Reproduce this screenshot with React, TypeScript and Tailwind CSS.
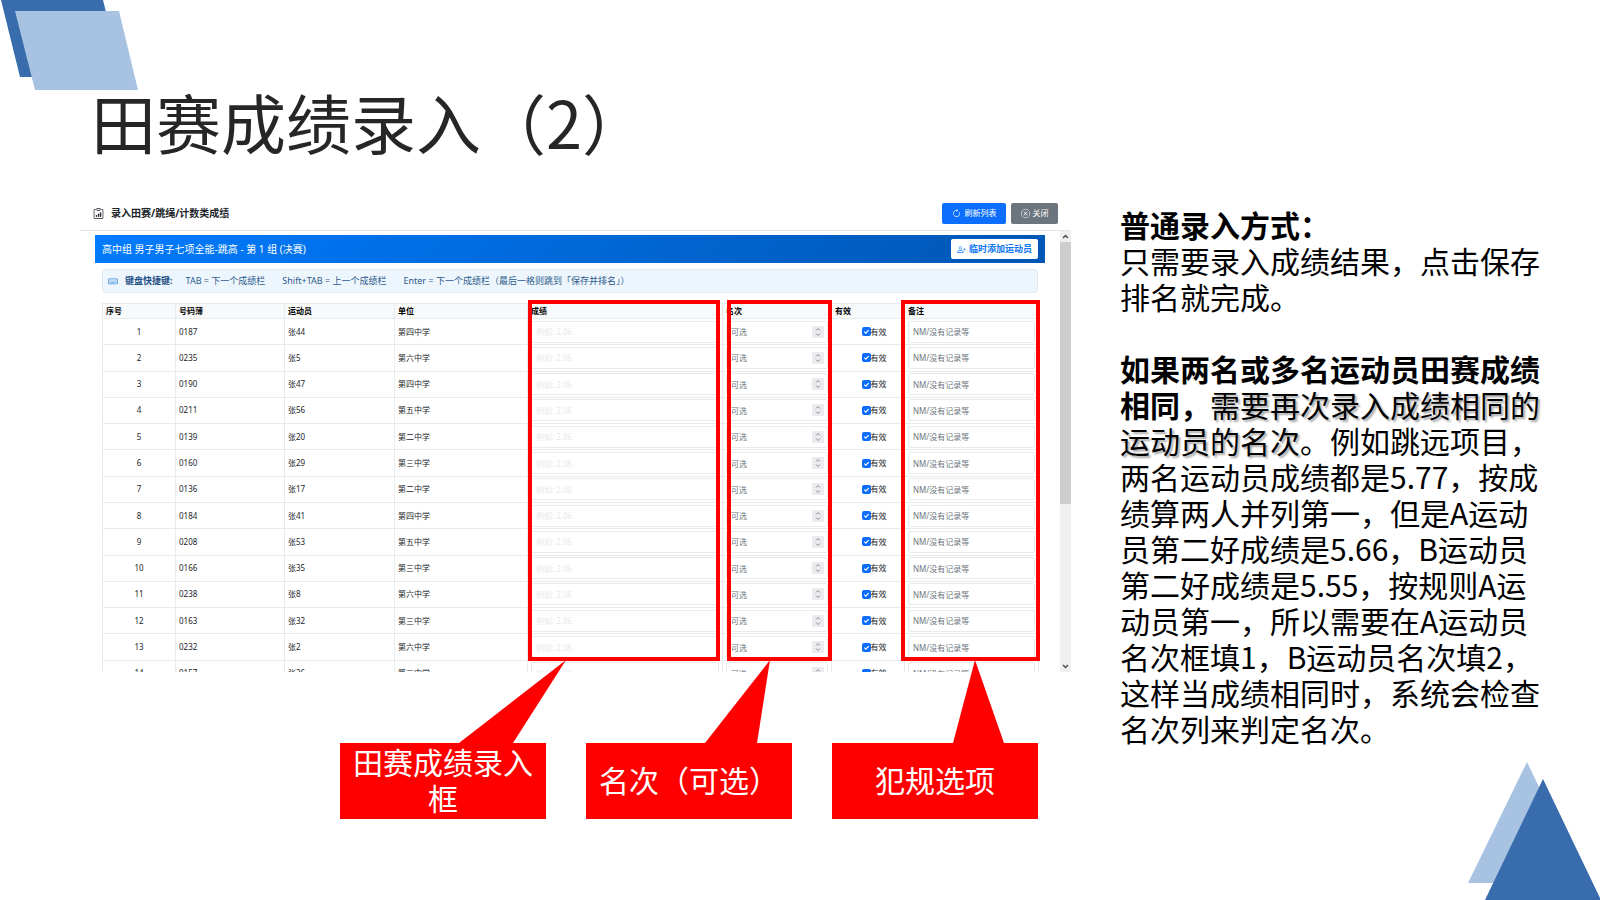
import React from 'react';
import {
  BsArrowClockwise,
  BsClipboardData,
  BsKeyboard,
  BsPersonPlus,
  BsXCircle,
} from 'react-icons/bs';

interface Athlete {
  bib: string;
  name: string;
  unit: string;
}

const athletes: Athlete[] = [
  { bib: '0187', name: '张44', unit: '第四中学' },
  { bib: '0235', name: '张5', unit: '第六中学' },
  { bib: '0190', name: '张47', unit: '第四中学' },
  { bib: '0211', name: '张56', unit: '第五中学' },
  { bib: '0139', name: '张20', unit: '第二中学' },
  { bib: '0160', name: '张29', unit: '第三中学' },
  { bib: '0136', name: '张17', unit: '第二中学' },
  { bib: '0184', name: '张41', unit: '第四中学' },
  { bib: '0208', name: '张53', unit: '第五中学' },
  { bib: '0166', name: '张35', unit: '第三中学' },
  { bib: '0238', name: '张8', unit: '第六中学' },
  { bib: '0163', name: '张32', unit: '第三中学' },
  { bib: '0232', name: '张2', unit: '第六中学' },
  { bib: '0157', name: '张26', unit: '第三中学' },
];

const cell = 'border border-[#e9ecef] px-[3px] py-0';
const field = 'h-[22px] w-full rounded-xs border border-[#e9ecef] bg-white px-1 text-[8px]';
const frame = 'pointer-events-none absolute -top-1 z-10 h-[361px] border-4 border-[#ff0000]';

function Decorations() {
  return (
    <>
      <svg className="absolute left-0 top-0" width="140" height="92" aria-hidden="true">
        <polygon points="1,0 103,0 122,77 20,77" fill="#386cad" />
        <polygon points="15,11 119,11 138,90 35,90" fill="#a8c3e2" />
      </svg>
      <svg className="absolute bottom-0 right-0" width="134" height="140" aria-hidden="true">
        <polygon points="61,2 119,123 2,123" fill="#a8c3e2" />
        <polygon points="77,19 135,140 19,140" fill="#386cad" />
      </svg>
    </>
  );
}

function ScrollBar() {
  return (
    <div className="flex w-[11px] shrink-0 flex-col items-center bg-[#f0f0f0]" aria-hidden="true">
      <svg className="my-0.5" width="7" height="7" viewBox="0 0 7 7">
        <path d="M1 5l2.5-2.5L6 5" fill="none" stroke="#505050" strokeWidth="1.5" />
      </svg>
      <div className="h-[262px] w-full bg-[#cdcdcd]" />
      <svg className="mb-0.5 mt-auto" width="7" height="7" viewBox="0 0 7 7">
        <path d="M1 2l2.5 2.5L6 2" fill="none" stroke="#505050" strokeWidth="1.5" />
      </svg>
    </div>
  );
}

function AthleteRow({ athlete, index }: { athlete: Athlete; index: number }) {
  return (
    <tr>
      <td className={`${cell} text-center`}>{index}</td>
      <td className={cell}>{athlete.bib}</td>
      <td className={cell}>{athlete.name}</td>
      <td className={cell}>{athlete.unit}</td>
      <td className={cell}>
        <input
          type="text"
          aria-label={`成绩 ${index}`}
          placeholder="例如: 2.06"
          className={`${field} block placeholder:text-[#e8e8e8]`}
        />
      </td>
      <td className={cell}>
        <div className="relative">
          <input
            type="text"
            inputMode="numeric"
            aria-label={`名次 ${index}`}
            placeholder="可选"
            className={`${field} block placeholder:text-[#6c757d]`}
          />
          <span className="absolute right-1 top-[5px] flex h-3 w-3 items-center justify-center bg-[#ececf0]">
            <svg width="6" height="10" viewBox="0 0 6 10" fill="none" stroke="#8a8a8a">
              <path d="M1 3.5l2-2 2 2M1 6.5l2 2 2-2" />
            </svg>
          </span>
        </div>
      </td>
      <td className={cell}>
        <label className="relative flex items-center justify-center pl-3">
          <input
            type="checkbox"
            defaultChecked
            className="peer absolute h-2 w-2 opacity-0"
          />
          <span className="flex h-[9px] w-[9px] items-center justify-center rounded-xs bg-[#dee2e6] peer-checked:bg-[#0d6efd]">
            <svg width="7" height="7" viewBox="0 0 7 7" fill="none" stroke="#fff" strokeWidth="1.2">
              <path d="M1.3 3.6l1.5 1.5 2.9-2.9" />
            </svg>
          </span>
          有效
        </label>
      </td>
      <td className={cell}>
        <input
          type="text"
          aria-label={`备注 ${index}`}
          placeholder="NM/没有记录等"
          className={`${field} block placeholder:text-[#6c757d]`}
        />
      </td>
    </tr>
  );
}

function ResultTable() {
  return (
    <table className="mt-2.5 h-[384px] w-full table-fixed border-collapse text-left text-[8px] leading-3 text-[#212529]">
      <colgroup>
        <col className="w-[73px]" />
        <col className="w-[109px]" />
        <col className="w-[110px]" />
        <col className="w-[133px]" />
        <col className="w-[195px]" />
        <col className="w-[109px]" />
        <col className="w-[73px]" />
        <col className="w-[134px]" />
      </colgroup>
      <thead>
        <tr className="h-[15px] bg-[#f8f9fa] text-black">
          <th className={cell}>序号</th>
          <th className={cell}>号码薄</th>
          <th className={cell}>运动员</th>
          <th className={cell}>单位</th>
          <th className={`${cell} relative`}>
            成绩
            <span className={`${frame} left-0 right-0.5`} />
          </th>
          <th className={`${cell} relative`}>
            名次
            <span className={`${frame} left-1 -right-px`} />
          </th>
          <th className={cell}>有效</th>
          <th className={`${cell} relative`}>
            备注
            <span className={`${frame} -left-1 -right-0.5`} />
          </th>
        </tr>
      </thead>
      <tbody>
        {athletes.map((athlete, i) => (
          <AthleteRow key={athlete.bib} athlete={athlete} index={i + 1} />
        ))}
      </tbody>
    </table>
  );
}

function EntryPanel() {
  return (
    <section className="font-['Noto_Sans','Noto_Sans_CJK_SC',sans-serif]">
      <header className="flex h-[35px] items-center border-b border-[#e5e7ea] px-[13px]">
        <BsClipboardData className="h-[11px] w-[11px] text-[#212529]" />
        <h2 className="ml-[7px] text-[10px] font-bold text-[#212529]">录入田赛/跳绳/计数类成绩</h2>
        <button
          type="button"
          className="ml-auto flex h-[21px] w-16 items-center justify-center gap-1 rounded-xs bg-[#0d6efd] text-[8px] text-white"
        >
          <BsArrowClockwise className="h-[9px] w-[9px]" />
          刷新列表
        </button>
        <button
          type="button"
          className="ml-[5px] flex h-[21px] w-[47px] items-center justify-center gap-[3px] rounded-xs bg-[#6c757d] text-[8px] text-white"
        >
          <BsXCircle className="h-[9px] w-[9px]" />
          关闭
        </button>
      </header>

      <div className="flex h-[441px] overflow-hidden">
        <div className="min-w-0 flex-1 px-[15px] pt-1">
          <div className="flex h-7 items-center justify-between bg-[linear-gradient(135deg,#007bff,#0056b3)] px-[7px] text-white">
            <span className="text-[10px]">高中组 男子男子七项全能-跳高 - 第 1 组 (决赛)</span>
            <button
              type="button"
              className="flex h-5 w-[87px] items-center justify-center gap-[3px] rounded-xs bg-white text-[9px] font-bold text-[#0b76f0]"
            >
              <BsPersonPlus className="h-[9px] w-[9px]" />
              临时添加运动员
            </button>
          </div>

          <div className="mx-[7px]">
            <div className="mt-1.5 flex h-6 items-center gap-[13px] rounded-sm border border-[#dfeaf5] bg-[#eef6fd] px-[5px] text-[9px] text-[#2c5a8c]">
              <span className="flex items-center gap-[7px] font-bold text-[#1d4f85]">
                <BsKeyboard className="h-2.5 w-2.5 text-[#3f8fd8]" />
                键盘快捷键:
              </span>
              <div className="flex gap-[17px]">
                <span>TAB = 下一个成绩栏</span>
                <span>Shift+TAB = 上一个成绩栏</span>
                <span>Enter = 下一个成绩栏（最后一格则跳到「保存并排名」）</span>
              </div>
            </div>
            <ResultTable />
          </div>
        </div>
        <ScrollBar />
      </div>
    </section>
  );
}

interface CalloutProps {
  children: React.ReactNode;
  points: string;
}

// Red label with a pointer that reaches up to the highlighted column
function Callout({ children, points }: CalloutProps) {
  return (
    <div className="relative flex h-[76px] w-[206px] items-center justify-center bg-[#ff0000] px-2 pb-1 text-center text-[30px] leading-9 text-white">
      <svg
        className="pointer-events-none absolute bottom-full left-0 z-20 overflow-visible"
        width="206"
        height="83"
        aria-hidden="true"
      >
        <polygon points={points} fill="#ff0000" />
      </svg>
      {children}
    </div>
  );
}

function Explanation() {
  return (
    <aside className="mt-2.5 w-[440px] shrink-0 text-[30px] leading-9 text-black">
      <h2 className="font-bold">普通录入方式：</h2>
      <p>
        只需要录入成绩结果，点击保存
        <br />
        排名就完成。
      </p>
      <p className="mt-9">
        <strong>
          如果两名或多名运动员田赛成绩
          <br />
          相同，
        </strong>
        <span className="[text-shadow:2px_2px_2px_rgba(0,0,0,0.35)]">
          需要再次录入成绩相同的
          <br />
          运动员的名次
        </span>
        。例如跳远项目，
        <br />
        两名运动员成绩都是5.77，按成
        <br />
        绩算两人并列第一，但是A运动
        <br />
        员第二好成绩是5.66，B运动员
        <br />
        第二好成绩是5.55，按规则A运
        <br />
        动员第一，所以需要在A运动员
        <br />
        名次框填1，B运动员名次填2，
        <br />
        这样当成绩相同时，系统会检查
        <br />
        名次列来判定名次。
      </p>
    </aside>
  );
}

function App() {
  return (
    <main
      lang="zh-CN"
      className="relative min-h-screen overflow-hidden bg-white pl-20 pr-10 pt-[85px] font-['Noto_Sans_CJK_SC',sans-serif]"
    >
      <Decorations />

      <h1 className="pl-[11px] text-[65px] leading-[72px] text-[#262626]">田赛成绩录入（2）</h1>

      <div className="mt-[39px] flex gap-[49px]">
        <div className="min-w-0 flex-1">
          <EntryPanel />
          <div className="mt-[71px] flex gap-10 pl-[260px]">
            <Callout points="226,0 119,83 173,83">
              田赛成绩录入
              <br />框
            </Callout>
            <Callout points="184,0 119,83 171,83">名次（可选）</Callout>
            <Callout points="143,0 121,83 172,83">犯规选项</Callout>
          </div>
        </div>
        <Explanation />
      </div>
    </main>
  );
}

export default App;
